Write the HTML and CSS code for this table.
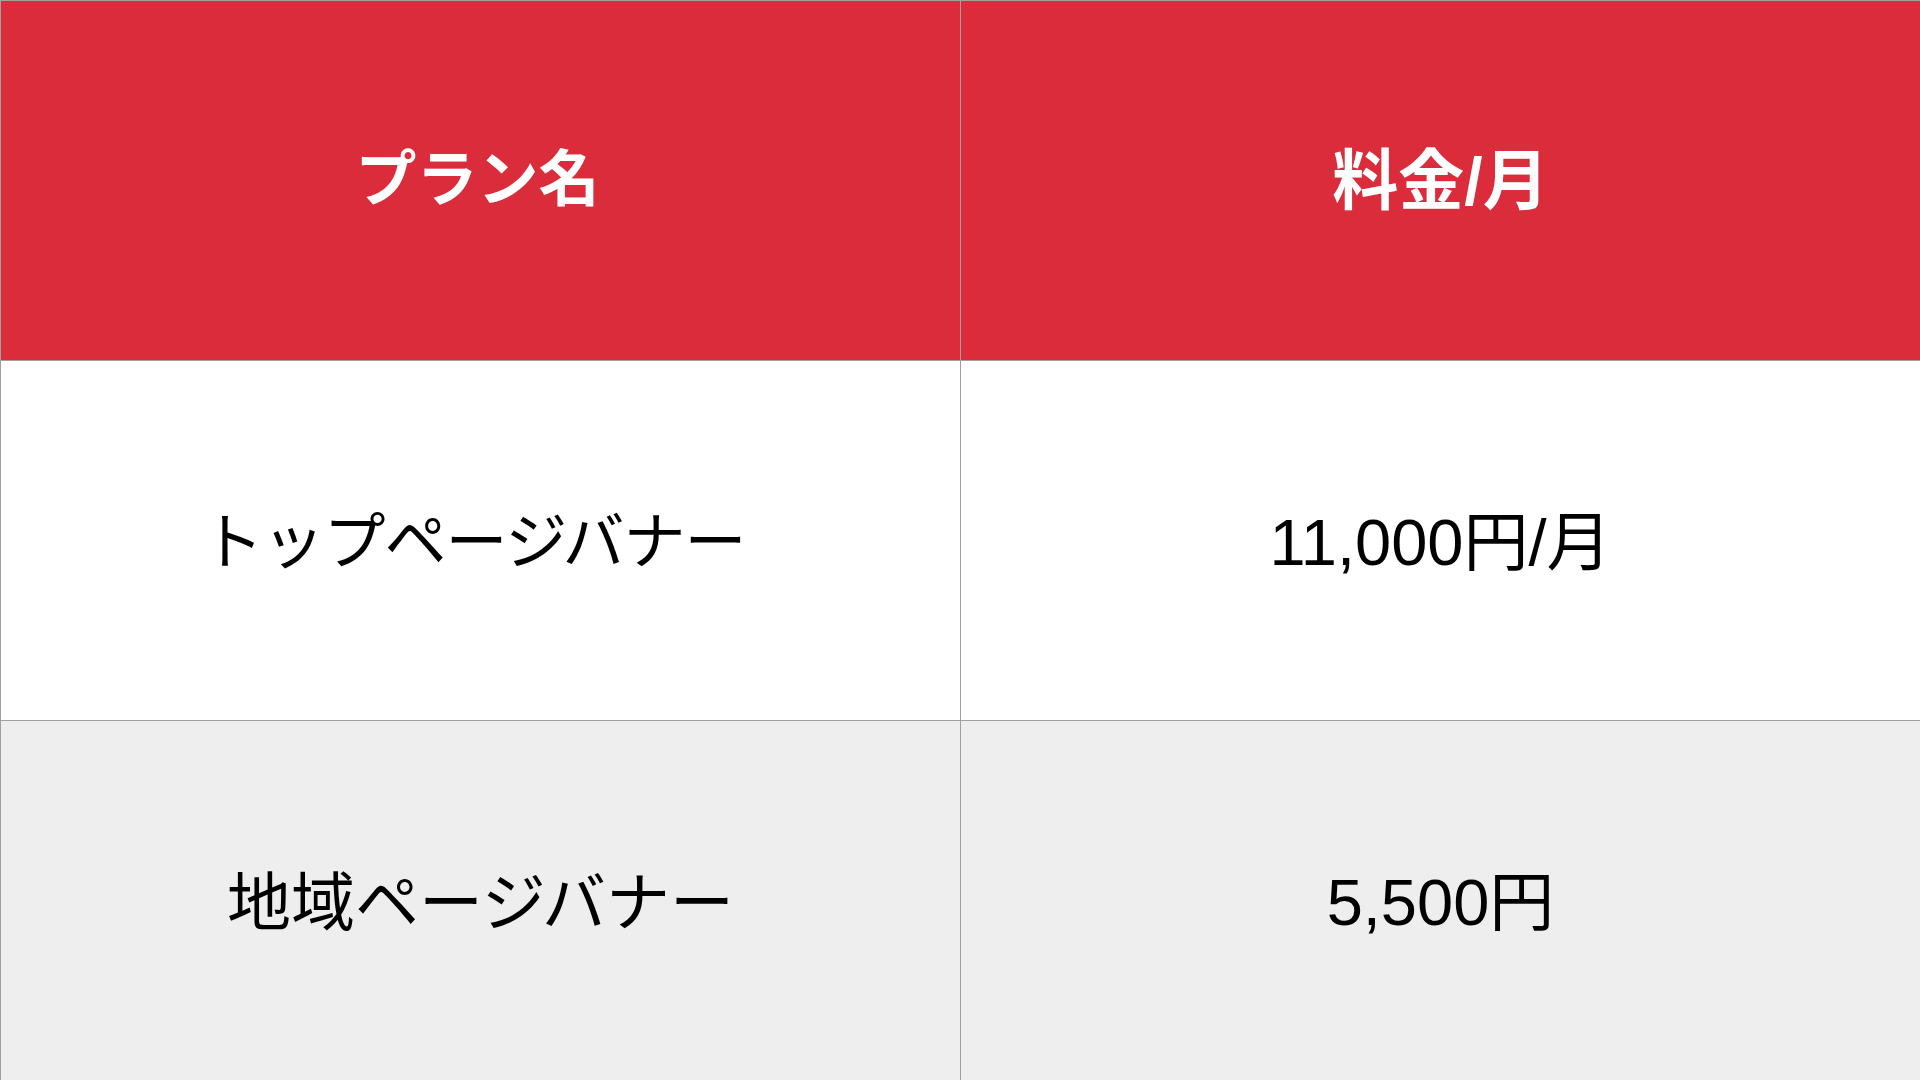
FILE: index.html
```html
<!DOCTYPE html>
<html lang="ja">
<head>
<meta charset="utf-8">
<title>プラン</title>
<link rel="stylesheet" href="styles.css">
</head>
<body>
<div class="table">
  <div class="cell head name-head">プラン名</div>
  <div class="cell head price">料金/月</div>
  <div class="cell name-top">トップページバナー</div>
  <div class="cell price">11,000円/月</div>
  <div class="cell alt name-area">地域ページバナー</div>
  <div class="cell alt price">5,500円</div>
</div>
</body>
</html>
```

FILE: styles.css
```css
html, body {
  margin: 0;
  padding: 0;
  background: #ffffff;
}
body {
  width: 1920px;
  height: 1080px;
  overflow: hidden;
  font-family: "Liberation Sans", "Noto Sans CJK JP", sans-serif;
}
.table {
  display: grid;
  grid-template-columns: 960px 960px;
  grid-template-rows: 360px 360px 360px;
}
.cell {
  box-sizing: border-box;
  border-top: 1px solid #a0a0a0;
  border-left: 1px solid #a0a0a0;
  padding-bottom: 8px;
  display: flex;
  align-items: center;
  justify-content: center;
  font-size: 62px;
  color: #000000;
  background: #ffffff;
  white-space: nowrap;
}
.head {
  background: #da2c3b;
  color: #ffffff;
  font-weight: bold;
  padding-bottom: 12px;
}
.name-head {
  font-size: 61px;
  padding-right: 6px;
}
.name-top {
  font-size: 62px;
  letter-spacing: -1px;
  padding-right: 14px;
}
.name-area {
  font-size: 64px;
}
.price {
  font-size: 65px;
}
.head.price {
  font-size: 66px;
}
.alt {
  background: #eeeeee;
}
```
